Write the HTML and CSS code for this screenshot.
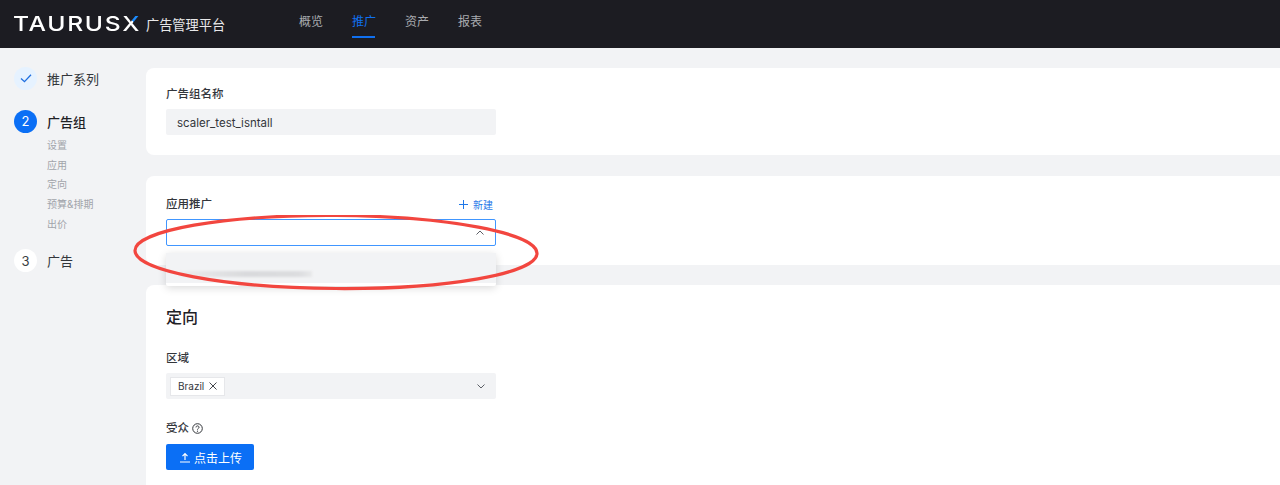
FILE: index.html
```html
<!DOCTYPE html>
<html>
<head>
    <title>广告管理平台</title>
    <link rel="stylesheet" href="styles.css">
</head>
<body>
    <div class="header">
        <div class="logo-box"><div class="logo">TAURUS<span class="logo-x">X</span></div></div>
        <div class="logo-sub">广告管理平台</div>
        <div class="nav">
            <div class="nav-item">概览</div>
            <div class="nav-item active">推广</div>
            <div class="nav-item">资产</div>
            <div class="nav-item">报表</div>
        </div>
    </div>

    <div class="main">
        <div class="steps">
            <div class="step">
                <div class="step-num done">
                    <svg width="14" height="14" viewBox="0 0 14 14"><path d="M2 7.5l3.5 3.2L12 3.8" fill="none" stroke="#1f6fe0" stroke-width="1.3"/></svg>
                </div>
                <div class="step-label">推广系列</div>
            </div>
            <div class="step current">
                <div class="step-num on">2</div>
                <div class="step-label">广告组</div>
            </div>
            <div class="sub-steps">
                <div>设置</div>
                <div>应用</div>
                <div>定向</div>
                <div>预算&amp;排期</div>
                <div>出价</div>
            </div>
            <div class="step last">
                <div class="step-num">3</div>
                <div class="step-label">广告</div>
            </div>
        </div>

        <div class="content">
            <div class="card card-name">
                <div class="field-label">广告组名称</div>
                <div class="input">scaler_test_isntall</div>
            </div>

            <div class="card card-app">
                <div class="field-head">
                    <div class="field-label">应用推广</div>
                    <div class="new-link">
                        <svg width="9" height="9" viewBox="0 0 9 9"><path d="M4.5 0v9M0 4.5h9" stroke="#1f78e8" stroke-width="1"/></svg>
                        <span>新建</span>
                    </div>
                </div>
                <div class="select-open">
                    <svg width="8" height="5" viewBox="0 0 8 5"><path d="M.5 4.5L4 1l3.5 3.5" fill="none" stroke="#5c5f66" stroke-width="1"/></svg>
                </div>
                <div class="dropdown">
                    <div class="option"><div class="blur-bar"></div></div>
                </div>
            </div>

            <div class="card card-target">
                <div class="card-title">定向</div>
                <div class="field-label">区域</div>
                <div class="input select">
                    <div class="tag">Brazil
                        <svg width="8" height="8" viewBox="0 0 8 8"><path d="M.5.5l7 7M7.5.5l-7 7" stroke="#44474d" stroke-width="1"/></svg>
                    </div>
                    <svg width="8" height="5" viewBox="0 0 8 5"><path d="M.5.5L4 4 7.5.5" fill="none" stroke="#5c5f66" stroke-width="1"/></svg>
                </div>
                <div class="field-label audience">受众
                    <svg width="11" height="11" viewBox="0 0 11 11"><circle cx="5.5" cy="5.5" r="4.8" fill="none" stroke="#33363b" stroke-width="1"/><path d="M4 4.4c0-2 3-2 3 0 0 1.1-1.5 1-1.5 2.2" fill="none" stroke="#33363b" stroke-width="1"/><circle cx="5.5" cy="8.2" r=".6" fill="#33363b"/></svg>
                </div>
                <div class="upload-btn">
                    <svg width="10" height="11" viewBox="0 0 10 11"><path d="M5 8V2M2.5 4.2L5 1.7l2.5 2.5M0 10h10" fill="none" stroke="#fff" stroke-width="1.2"/></svg>
                    <span>点击上传</span>
                </div>
            </div>
        </div>
    </div>

    <!-- 红色标注圈 -->
    <svg class="mark" width="420" height="90" viewBox="0 0 420 90">
        <ellipse cx="205" cy="37" rx="201" ry="36.5" fill="none" stroke="#f2463f" stroke-width="3.2" transform="rotate(0.4 205 37)"/>
    </svg>
</body>
</html>
```

FILE: styles.css
```css
body {
    margin: 0;
    height: 485px;
    overflow: hidden;
    background: #f2f3f5;
    font-family: "Inter", "Noto Sans CJK SC", sans-serif;
    color: #1f2126;
}

/* 顶部导航 */
.header {
    height: 48px;
    background: #1c1c22;
    display: flex;
    align-items: center;
    box-sizing: border-box;
    padding-left: 14px;
}
.logo-box {
    width: 125px;
}
.logo {
    font-family: "Inter", sans-serif;
    font-size: 20.5px;
    font-weight: 500;
    line-height: 24px;
    letter-spacing: 1.4px;
    margin-left: -1px;
    color: #fff;
    white-space: nowrap;
    transform: scaleX(1.2);
    transform-origin: left center;
}
.logo-x {
    display: inline-block;
    background: linear-gradient(to top right, #fff 58%, #1c8cff 59%);
    -webkit-background-clip: text;
    background-clip: text;
    color: transparent;
}
.logo-sub {
    font-size: 13.2px;
    color: #e8e8ea;
    margin-left: 7px;
    width: 80px;
}
.nav {
    display: flex;
    gap: 30px;
    margin-left: 73px;
    height: 48px;
}
.nav-item {
    font-size: 12px;
    line-height: 44px;
    width: 23px;
    white-space: nowrap;
    color: #a9abb0;
    box-sizing: border-box;
    height: 38px;
}
.nav-item.active {
    color: #1070f0;
    border-bottom: 2px solid #1070f0;
}

.main {
    display: flex;
    height: 437px;
}

/* 左侧步骤 */
.steps {
    width: 146px;
    flex: none;
    box-sizing: border-box;
    padding: 18px 0 0 14px;
}
.step {
    display: flex;
    align-items: center;
    gap: 10px;
    height: 24px;
}
.step.current {
    margin-top: 19px;
}
.step.last {
    margin-top: 14px;
}
.step-num {
    width: 23px;
    height: 23px;
    border-radius: 50%;
    background: #fff;
    color: #3a3d43;
    font-size: 13px;
    display: flex;
    align-items: center;
    justify-content: center;
}
.step-num.done {
    background: #e6f2ff;
}
.step-num.on {
    background: #0b6ff5;
    color: #fff;
}
.step-label {
    font-size: 13px;
    color: #33363b;
}
.current .step-label {
    font-weight: 500;
    color: #1f2126;
}
.sub-steps {
    margin: 3px 0 0 33px;
    font-size: 10px;
    line-height: 19.7px;
    color: #a1a4aa;
}

/* 右侧内容 */
.content {
    flex: 1;
    padding-top: 20px;
}
.card {
    position: relative;
    background: #fff;
    border-radius: 8px 0 0 8px;
    box-sizing: border-box;
    padding: 18px 20px 0;
}
.card-name {
    height: 87px;
    margin-bottom: 21px;
}
.card-name .field-label {
    margin-top: 1px;
}
.card-name .input {
    margin-top: 8px;
    line-height: 28px;
}
.card-app {
    height: 89px;
    margin-bottom: 20px;
}
.card-target {
    height: 200px;
    border-radius: 8px 0 0 0;
}
.field-label {
    font-size: 11.5px;
    line-height: 14px;
    font-weight: 500;
    color: #33363b;
}
.input {
    width: 330px;
    height: 26px;
    margin-top: 9px;
    background: #f2f3f5;
    border-radius: 2px;
    font-size: 11.5px;
    line-height: 26px;
    box-sizing: border-box;
    padding-left: 11px;
    color: #33363b;
}
.field-head {
    width: 327px;
    display: flex;
    justify-content: space-between;
    align-items: center;
    height: 14px;
    margin-top: 3px;
}
.new-link {
    display: flex;
    align-items: center;
    gap: 5px;
    font-size: 10px;
    color: #1f78e8;
}
.select-open {
    width: 330px;
    height: 27px;
    margin-top: 8px;
    border: 1px solid #4096ff;
    border-radius: 2px;
    box-sizing: border-box;
    background: #fff;
    display: flex;
    justify-content: flex-end;
    align-items: center;
    padding: 0 11px 1px 0;
}
.dropdown {
    position: absolute;
    left: 20px;
    top: 77px;
    width: 330px;
    height: 33px;
    background: #fff;
    border-radius: 2px;
    box-shadow: 0 2px 8px rgba(0, 0, 0, 0.15);
    z-index: 2;
}
.option {
    height: 30px;
    background: #f2f3f5;
    overflow: hidden;
}
.blur-bar {
    width: 132px;
    height: 6px;
    margin: 18px 0 0 14px;
    background: linear-gradient(90deg, #eceded, #d9dadc 50%, #dcdddf 90%, #e8e9ea);
    filter: blur(1px);
}
.card-title {
    font-size: 16px;
    font-weight: 500;
    line-height: 22px;
    margin: 3px 0 23px;
}
.select {
    display: flex;
    justify-content: space-between;
    align-items: center;
    padding: 0 11px 0 4px;
    margin-top: 8px;
}
.tag {
    height: 19px;
    background: #fff;
    border: 1px solid #e6e7ea;
    box-sizing: border-box;
    padding: 0 7px 0 7px;
    display: flex;
    align-items: center;
    gap: 5px;
    font-size: 10px;
    color: #33363b;
}
.audience {
    display: flex;
    align-items: center;
    gap: 3px;
    margin-top: 22px;
}
.upload-btn {
    width: 88px;
    height: 26px;
    margin-top: 9px;
    background: #0b6ff5;
    border-radius: 2px;
    color: #fff;
    font-size: 12px;
    display: flex;
    align-items: center;
    justify-content: center;
    gap: 4px;
    padding-left: 2px;
    box-sizing: border-box;
}

.mark {
    position: absolute;
    left: 131px;
    top: 215px;
    z-index: 5;
}
```
